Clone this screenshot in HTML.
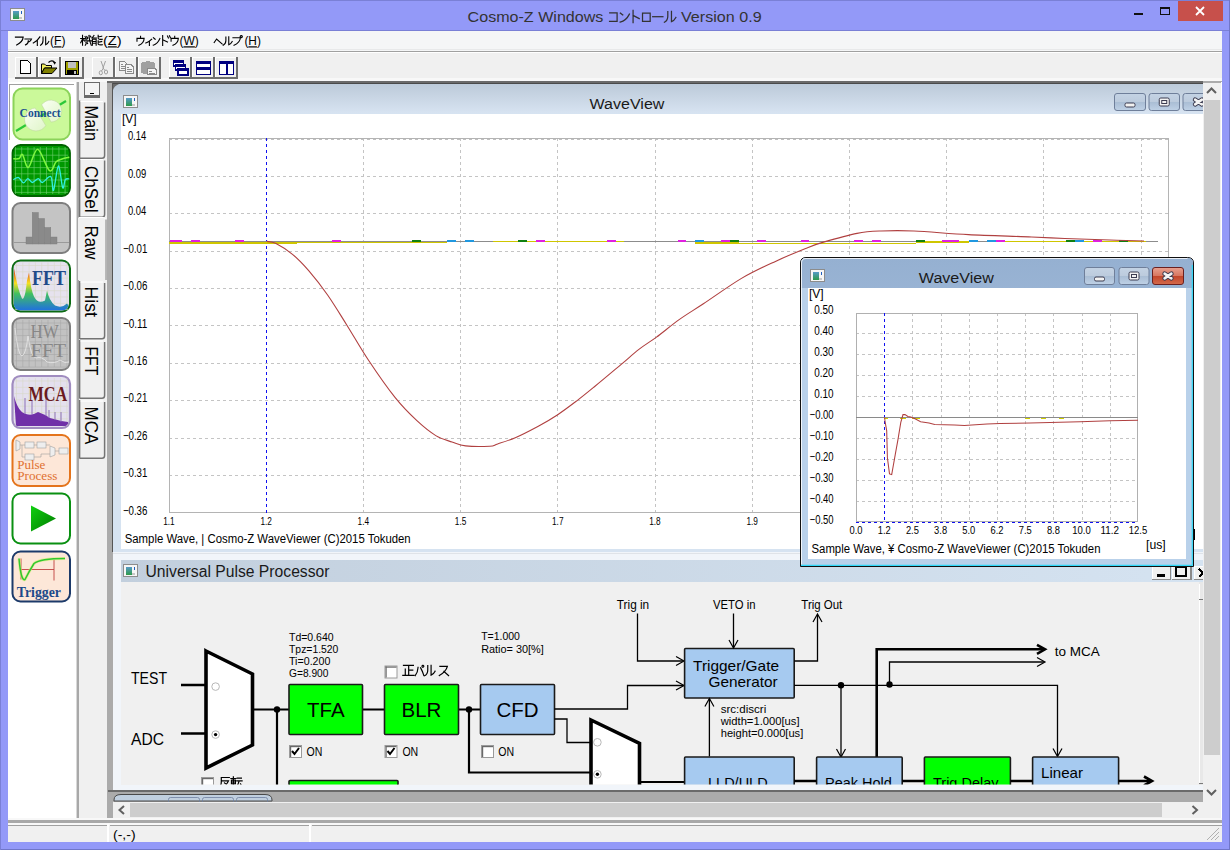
<!DOCTYPE html>
<html><head><meta charset="utf-8">
<style>
html,body{margin:0;padding:0;width:1230px;height:850px;overflow:hidden;background:#9399f8;}
svg{position:absolute;left:0;top:0;}
text{font-family:"Liberation Sans",sans-serif;}
.serif{font-family:"Liberation Serif",serif;}
</style></head><body>
<svg width="1230" height="850" viewBox="0 0 1230 850" shape-rendering="crispEdges">
<defs>
<linearGradient id="gMainTitle" x1="0" y1="0" x2="0" y2="1"><stop offset="0" stop-color="#bccad9"/><stop offset="1" stop-color="#d7e3f1"/></linearGradient>
<linearGradient id="gSmallTitle" x1="0" y1="0" x2="0" y2="1"><stop offset="0" stop-color="#95b0d1"/><stop offset="1" stop-color="#b8d0ea"/></linearGradient>
<linearGradient id="gBtn" x1="0" y1="0" x2="0" y2="1"><stop offset="0" stop-color="#c4d3e4"/><stop offset="0.5" stop-color="#bccbdd"/><stop offset="0.5" stop-color="#a9bdd4"/><stop offset="1" stop-color="#bfd1e6"/></linearGradient>
<linearGradient id="gClose" x1="0" y1="0" x2="0" y2="1"><stop offset="0" stop-color="#e8a190"/><stop offset="0.5" stop-color="#d7755f"/><stop offset="0.5" stop-color="#c2442a"/><stop offset="1" stop-color="#d36a4c"/></linearGradient>
<linearGradient id="gFFT" x1="0" y1="0" x2="0" y2="1"><stop offset="0" stop-color="#e03020"/><stop offset="0.35" stop-color="#f8e020"/><stop offset="0.6" stop-color="#40c060"/><stop offset="1" stop-color="#2070e0"/></linearGradient>
<linearGradient id="gPlay" x1="0" y1="0" x2="1" y2="1"><stop offset="0" stop-color="#10d010"/><stop offset="1" stop-color="#007a00"/></linearGradient>
<linearGradient id="gIcon" x1="0" y1="0" x2="0" y2="1"><stop offset="0" stop-color="#5a9ad0"/><stop offset="1" stop-color="#2f9a50"/></linearGradient>
</defs>

<rect x="0" y="0" width="1230" height="850" fill="#9399f8"/>
<rect x="0" y="0" width="1230" height="1" fill="#7a80d6"/>
<rect x="0" y="30" width="1230" height="1" fill="#7a80d6"/><rect x="0" y="849" width="1230" height="1" fill="#7076c8"/><rect x="1229" y="0" width="1" height="850" fill="#7076c8"/><rect x="0" y="0" width="1" height="850" fill="#7a80d6"/>
<rect x="10.5" y="8.5" width="14" height="12" fill="#f6f6f6" stroke="#8c8c8c" stroke-width="1"/><rect x="12.5" y="10.5" width="6" height="8" fill="url(#gIcon)"/><rect x="20.5" y="10.5" width="1" height="3" fill="#2060c0"/><rect x="18.5" y="16.5" width="3" height="2" fill="#c8c8c8"/>
<text x="467.6" y="22" font-size="15.5" fill="#333" textLength="135.8" lengthAdjust="spacingAndGlyphs" shape-rendering="auto">Cosmo-Z Windows</text>
<path transform="translate(609.3,12.3) scale(0.8300,0.9700)" d="M0.5 0.6 H9.4 V9.4 H0.3" fill="none" stroke="#333" stroke-width="1.25" vector-effect="non-scaling-stroke" stroke-linecap="square" shape-rendering="auto"/>
<path transform="translate(619.5,12.3) scale(1.0300,1.0200)" d="M0.8 0.8 L3.2 2.6 M0.6 9.6 Q6.5 8.2 9.6 1.8" fill="none" stroke="#333" stroke-width="1.25" vector-effect="non-scaling-stroke" stroke-linecap="square" shape-rendering="auto"/>
<path transform="translate(632.2,10.3) scale(0.7300,1.2200)" d="M1.2 0 V10 M1.2 4.2 L9.6 6.8" fill="none" stroke="#333" stroke-width="1.25" vector-effect="non-scaling-stroke" stroke-linecap="square" shape-rendering="auto"/>
<path transform="translate(642,12.5) scale(0.8700,0.9500)" d="M0.6 0.6 H9.4 V9.4 H0.6 Z" fill="none" stroke="#333" stroke-width="1.25" vector-effect="non-scaling-stroke" stroke-linecap="square" shape-rendering="auto"/>
<path transform="translate(652.7,12) scale(1.0200,0.9400)" d="M0 5 H10" fill="none" stroke="#333" stroke-width="1.25" vector-effect="non-scaling-stroke" stroke-linecap="square" shape-rendering="auto"/>
<path transform="translate(663.9,11) scale(1.2200,1.1500)" d="M3.2 0.6 V4.5 Q3.2 8.2 0.4 9.8 M6.2 0.4 V9.2 Q8.4 8.4 9.8 5.6" fill="none" stroke="#333" stroke-width="1.25" vector-effect="non-scaling-stroke" stroke-linecap="square" shape-rendering="auto"/>
<text x="681" y="22" font-size="15.5" fill="#333" textLength="80.6" lengthAdjust="spacingAndGlyphs" shape-rendering="auto">Version 0.9</text>
<rect x="1134" y="13" width="9" height="2" fill="#111"/>
<rect x="1160.5" y="7.5" width="9" height="7" fill="none" stroke="#111" stroke-width="1"/><rect x="1160" y="7" width="10" height="2" fill="#111"/>
<rect x="1178" y="1" width="45" height="20" fill="#c7504b"/>
<path d="M1196 7 L1204 15 M1204 7 L1196 15" stroke="#fff" stroke-width="1.8" shape-rendering="auto"/>
<rect x="8" y="31" width="1214" height="20" fill="#f5f6f7"/>
<rect x="8" y="49" width="1214" height="1" fill="#e8e9ea"/><rect x="8" y="51" width="1214" height="1" fill="#a0a0a0"/><rect x="8" y="52" width="1214" height="1" fill="#ffffff"/>
<g font-size="12" fill="#000" shape-rendering="auto">
<path transform="translate(14.9,36.4) scale(0.8800,0.8800)" d="M0.6 0.8 H9.4 Q9 6.2 2 9.8" fill="none" stroke="#000" stroke-width="1.1" vector-effect="non-scaling-stroke" stroke-linecap="square" shape-rendering="auto"/>
<path transform="translate(24.6,38.3) scale(0.7400,0.6700)" d="M0.5 1 H9.4 Q8.6 4.2 6 5.2 M5 3.6 Q5 8.2 1.2 9.8" fill="none" stroke="#000" stroke-width="1.1" vector-effect="non-scaling-stroke" stroke-linecap="square" shape-rendering="auto"/>
<path transform="translate(33,36.4) scale(0.7200,0.9100)" d="M9.6 0.5 Q6 5.2 0.4 7.2 M6 4 V10" fill="none" stroke="#000" stroke-width="1.1" vector-effect="non-scaling-stroke" stroke-linecap="square" shape-rendering="auto"/>
<path transform="translate(40.2,36.4) scale(0.8800,0.9100)" d="M3.2 0.6 V4.5 Q3.2 8.2 0.4 9.8 M6.2 0.4 V9.2 Q8.4 8.4 9.8 5.6" fill="none" stroke="#000" stroke-width="1.1" vector-effect="non-scaling-stroke" stroke-linecap="square" shape-rendering="auto"/>
<path transform="translate(80.7,35.4) scale(1.0800,0.9800)" d="M0 3.2 H3.4 M1.7 0 V10 M1.7 3.6 L0 7.4 M1.9 3.8 L3.4 5.6 M4 1.2 L5 2.6 L4 4 M5.6 1.2 L6.6 2.6 L5.6 4 M3.8 5.6 H10 M7.6 0 Q8 6 9.8 10 M4.2 10 L6 7 M8.8 0.6 L9.6 1.8 M4.6 7.6 L6.4 8.4" fill="none" stroke="#000" stroke-width="1.1" vector-effect="non-scaling-stroke" stroke-linecap="square" shape-rendering="auto"/>
<path transform="translate(91.5,35.4) scale(1.1100,0.9800)" d="M2.2 0 L0.6 2.6 H4.4 M0.8 4 H4.2 V10 M0.8 4 V10 M0.8 6.2 H4.2 M0.8 8 H4.2 M6 0 V3 Q6 4.2 9.8 4 M6 1.6 L9.2 0.8 M6 5.6 V8.8 Q6 9.8 9.8 9.6 M6 7 L9.2 6.2" fill="none" stroke="#000" stroke-width="1.1" vector-effect="non-scaling-stroke" stroke-linecap="square" shape-rendering="auto"/>
<path transform="translate(136.3,36.4) scale(0.8500,0.9100)" d="M5 0 V2.2 M0.8 5.2 V2.2 H9.2 Q9 7.2 3 9.8" fill="none" stroke="#000" stroke-width="1.1" vector-effect="non-scaling-stroke" stroke-linecap="square" shape-rendering="auto"/>
<path transform="translate(145.5,38.5) scale(0.6500,0.7000)" d="M9.6 1 Q6 4.8 0.5 6.4 M6 3.8 V10" fill="none" stroke="#000" stroke-width="1.1" vector-effect="non-scaling-stroke" stroke-linecap="square" shape-rendering="auto"/>
<path transform="translate(152.8,37) scale(0.7400,0.8500)" d="M0.8 0.8 L3.2 2.6 M0.6 9.6 Q6.5 8.2 9.6 1.8" fill="none" stroke="#000" stroke-width="1.1" vector-effect="non-scaling-stroke" stroke-linecap="square" shape-rendering="auto"/>
<path transform="translate(161.3,35.5) scale(0.9100,1.0000)" d="M1.5 0 V10 M1.5 4.2 L6.8 6.4 M6.8 0.6 L7.8 2.6 M9 0.2 L10 2.2" fill="none" stroke="#000" stroke-width="1.1" vector-effect="non-scaling-stroke" stroke-linecap="square" shape-rendering="auto"/>
<path transform="translate(170.4,36.4) scale(0.8600,0.9100)" d="M5 0 V2.2 M0.8 5.2 V2.2 H9.2 Q9 7.2 3 9.8" fill="none" stroke="#000" stroke-width="1.1" vector-effect="non-scaling-stroke" stroke-linecap="square" shape-rendering="auto"/>
<path transform="translate(214.2,37.5) scale(0.8000,0.7000)" d="M0 7.2 L3 2.2 L10 9.4" fill="none" stroke="#000" stroke-width="1.1" vector-effect="non-scaling-stroke" stroke-linecap="square" shape-rendering="auto"/>
<path transform="translate(222.8,36.4) scale(0.9600,0.9100)" d="M3.2 0.6 V4.5 Q3.2 8.2 0.4 9.8 M6.2 0.4 V9.2 Q8.4 8.4 9.8 5.6" fill="none" stroke="#000" stroke-width="1.1" vector-effect="non-scaling-stroke" stroke-linecap="square" shape-rendering="auto"/>
<path transform="translate(232.4,35.5) scale(1.0800,1.0000)" d="M0.5 2.2 H7.4 Q7 7.2 1.5 9.8 M8.2 0.1 A1 1 0 1 0 8.21 0.1" fill="none" stroke="#000" stroke-width="1.1" vector-effect="non-scaling-stroke" stroke-linecap="square" shape-rendering="auto"/>
<text x="50" y="45.3" textLength="15.5" lengthAdjust="spacingAndGlyphs">(<tspan text-decoration="underline">F</tspan>)</text>
<text x="103" y="45.3" textLength="18.700000000000003" lengthAdjust="spacingAndGlyphs">(<tspan text-decoration="underline">Z</tspan>)</text>
<text x="179.5" y="45.3" textLength="19.400000000000006" lengthAdjust="spacingAndGlyphs">(<tspan text-decoration="underline">W</tspan>)</text>
<text x="244.4" y="45.3" textLength="16.49999999999997" lengthAdjust="spacingAndGlyphs">(<tspan text-decoration="underline">H</tspan>)</text>
</g>
<rect x="8" y="53" width="1214" height="28" fill="#f0f0f0"/>
<rect x="8" y="78" width="1214" height="4" fill="#f8f8f8"/>
<rect x="15" y="57" width="22" height="21" fill="#efefef"/><rect x="15" y="57" width="22" height="1" fill="#ffffff"/><rect x="15" y="57" width="1" height="21" fill="#ffffff"/><rect x="15" y="77.2" width="22.5" height="1.3" fill="#6e6e6e"/><rect x="36.3" y="57" width="1.3" height="21.5" fill="#6e6e6e"/>
<rect x="38" y="57" width="22" height="21" fill="#efefef"/><rect x="38" y="57" width="22" height="1" fill="#ffffff"/><rect x="38" y="57" width="1" height="21" fill="#ffffff"/><rect x="38" y="77.2" width="22.5" height="1.3" fill="#6e6e6e"/><rect x="59.3" y="57" width="1.3" height="21.5" fill="#6e6e6e"/>
<rect x="61" y="57" width="22" height="21" fill="#efefef"/><rect x="61" y="57" width="22" height="1" fill="#ffffff"/><rect x="61" y="57" width="1" height="21" fill="#ffffff"/><rect x="61" y="77.2" width="22.5" height="1.3" fill="#6e6e6e"/><rect x="82.3" y="57" width="1.3" height="21.5" fill="#6e6e6e"/>
<rect x="92" y="57" width="22" height="21" fill="#efefef"/><rect x="92" y="57" width="22" height="1" fill="#ffffff"/><rect x="92" y="57" width="1" height="21" fill="#ffffff"/><rect x="92" y="77.2" width="22.5" height="1.3" fill="#6e6e6e"/><rect x="113.3" y="57" width="1.3" height="21.5" fill="#6e6e6e"/>
<rect x="115" y="57" width="22" height="21" fill="#efefef"/><rect x="115" y="57" width="22" height="1" fill="#ffffff"/><rect x="115" y="57" width="1" height="21" fill="#ffffff"/><rect x="115" y="77.2" width="22.5" height="1.3" fill="#6e6e6e"/><rect x="136.3" y="57" width="1.3" height="21.5" fill="#6e6e6e"/>
<rect x="138" y="57" width="22" height="21" fill="#efefef"/><rect x="138" y="57" width="22" height="1" fill="#ffffff"/><rect x="138" y="57" width="1" height="21" fill="#ffffff"/><rect x="138" y="77.2" width="22.5" height="1.3" fill="#6e6e6e"/><rect x="159.3" y="57" width="1.3" height="21.5" fill="#6e6e6e"/>
<rect x="169" y="57" width="22" height="21" fill="#efefef"/><rect x="169" y="57" width="22" height="1" fill="#ffffff"/><rect x="169" y="57" width="1" height="21" fill="#ffffff"/><rect x="169" y="77.2" width="22.5" height="1.3" fill="#6e6e6e"/><rect x="190.3" y="57" width="1.3" height="21.5" fill="#6e6e6e"/>
<rect x="192" y="57" width="22" height="21" fill="#efefef"/><rect x="192" y="57" width="22" height="1" fill="#ffffff"/><rect x="192" y="57" width="1" height="21" fill="#ffffff"/><rect x="192" y="77.2" width="22.5" height="1.3" fill="#6e6e6e"/><rect x="213.3" y="57" width="1.3" height="21.5" fill="#6e6e6e"/>
<rect x="215" y="57" width="22" height="21" fill="#efefef"/><rect x="215" y="57" width="22" height="1" fill="#ffffff"/><rect x="215" y="57" width="1" height="21" fill="#ffffff"/><rect x="215" y="77.2" width="22.5" height="1.3" fill="#6e6e6e"/><rect x="236.3" y="57" width="1.3" height="21.5" fill="#6e6e6e"/>
<path d="M20.5 60.5 H27.5 L30.5 63.5 V73.5 H20.5 Z" fill="#fff" stroke="#000" stroke-width="1"/>
<path d="M41.5 64 H44.5 L46 65.5 H51.5 V68 H44.5 L41.5 73.5 Z" fill="#f4f060" stroke="#000" stroke-width="1" shape-rendering="auto"/><path d="M41.5 73.5 L44.5 68 H57 L52 73.5 Z" fill="#808000" stroke="#000" stroke-width="1" shape-rendering="auto"/><path d="M48.5 62.5 Q51.5 59.5 54.5 62" fill="none" stroke="#000" stroke-width="1.1" shape-rendering="auto"/><path d="M53 62 L56 62 L54.8 64.8 Z" fill="#000" shape-rendering="auto"/>
<rect x="65" y="61" width="14" height="14" fill="#000"/><rect x="66" y="62" width="12" height="12" fill="#a0a000"/><rect x="68" y="62" width="8" height="6" fill="#c0c0c0"/><rect x="67" y="70" width="10" height="4" fill="#000"/><rect x="74" y="71" width="2" height="3" fill="#c0c0c0"/>
<g stroke="#a0a0a0" fill="none" stroke-width="1" shape-rendering="auto"><path d="M101 61 L103.5 68 L101.5 71 M105.5 61 L103 68 L105 70.5"/><ellipse cx="100.8" cy="72.8" rx="1.6" ry="2"/><ellipse cx="106" cy="72" rx="1.6" ry="2"/></g>
<g fill="#f4f4f4" stroke="#8a8a8a" stroke-width="1"><path d="M119.5 61.5 H124.5 L126.5 63.5 V70.5 H119.5 Z"/><path d="M125.5 64.5 H131 L133.5 67 V73.5 H125.5 Z"/></g><g fill="#8a8a8a"><rect x="121" y="64" width="2" height="1"/><rect x="121" y="66" width="4" height="1"/><rect x="121" y="68" width="4" height="1"/><rect x="127" y="67" width="2" height="1"/><rect x="127" y="69" width="5" height="1"/><rect x="127" y="71" width="5" height="1"/></g>
<g fill="#a0a0a0"><rect x="141.2" y="62" width="13.5" height="11.5" rx="1.5"/><rect x="146" y="61" width="4" height="2"/></g><path d="M147.5 68.5 H155 L156.5 70 V74.5 H147.5 Z" fill="#f4f4f4" stroke="#8a8a8a" stroke-width="1"/><rect x="149" y="71" width="3" height="1" fill="#8a8a8a"/><rect x="149" y="73" width="6" height="0.8" fill="#8a8a8a"/>
<g fill="#fff" stroke="#000080" stroke-width="1.5"><rect x="173.5" y="61" width="10" height="5"/><rect x="175.5" y="65" width="10" height="5"/><rect x="178" y="69" width="10" height="6"/></g><g fill="#000080"><rect x="173" y="61" width="11" height="2"/><rect x="175" y="65" width="11" height="2"/><rect x="177" y="69" width="12" height="2"/></g>
<rect x="196.5" y="61.5" width="14" height="13" fill="#fff" stroke="#000080" stroke-width="1.5"/><rect x="196" y="61" width="15" height="3" fill="#000080"/><rect x="196" y="67" width="15" height="3" fill="#000080"/>
<rect x="219.5" y="61.5" width="14" height="13" fill="#fff" stroke="#000080" stroke-width="1.5"/><rect x="219" y="61" width="15" height="3" fill="#000080"/><rect x="226" y="61" width="1.5" height="14" fill="#000080"/>
<rect x="8" y="82" width="70" height="737" fill="#ffffff"/>
<rect x="9" y="84" width="65" height="1" fill="#a0a0a0"/><rect x="9" y="84" width="1" height="56" fill="#a0a0a0"/>
<rect x="76" y="82" width="1" height="737" fill="#d8d8d8"/><rect x="77" y="82" width="2" height="737" fill="#a8a8a8"/>
<g shape-rendering="auto">
<rect x="13.5" y="88.5" width="56.5" height="51" rx="9" fill="#cbf99a" stroke="#8cd35a" stroke-width="2"/>
<path d="M16 131 L66 101" stroke="#2cc838" stroke-width="2.2"/>
<defs><linearGradient id="gPlug" x1="0" y1="0" x2="1" y2="1"><stop offset="0" stop-color="#fbfff4"/><stop offset="1" stop-color="#dff5c8"/></linearGradient></defs>
<path d="M35.2 108 A11.5 11.5 0 1 0 45.8 125.6 Z" fill="url(#gPlug)" stroke="#c0d8a0" stroke-width="0.6"/>
<path d="M41.7 104.8 A11 11 0 1 1 51 122.1 Z" fill="url(#gPlug)" stroke="#c0d8a0" stroke-width="0.6"/>
<text x="19.6" y="117.4" font-size="13.5" class="serif" font-weight="bold" fill="#1a4f8f" textLength="41" lengthAdjust="spacingAndGlyphs">Connect</text>
<rect x="12.5" y="145" width="57.5" height="51" rx="8" fill="#009800" stroke="#006200" stroke-width="1.8"/>
<path d="M15.5 147 V194 M21.7 147 V194 M27.9 147 V194 M34.1 147 V194 M40.3 147 V194 M46.5 147 V194 M52.7 147 V194 M58.9 147 V194 M65.1 147 V194 M14.5 149.0 H68.0 M14.5 155.2 H68.0 M14.5 161.4 H68.0 M14.5 167.6 H68.0 M14.5 173.8 H68.0 M14.5 180.0 H68.0 M14.5 186.2 H68.0 M14.5 192.4 H68.0 " stroke="#70d070" stroke-width="0.6"/>
<path d="M13.3 158.8 C14.3 158.8 17.7 159.2 19.2 158.5 C20.7 157.8 21.0 153.0 22.5 154.5 C24.0 156.0 25.9 168.3 28.4 167.4 C30.9 166.5 34.2 148.8 37.7 149.3 C41.2 149.9 46.4 168.6 49.5 170.7 C52.6 172.8 54.0 163.8 56.1 161.8 C58.2 159.9 59.8 159.8 62 159 C64.2 158.2 68.1 157.5 69.3 157.2" fill="none" stroke="#80f840" stroke-width="1.5"/>
<path d="M13.3 179.6 C14.2 179.3 16.9 177.0 18.6 177.6 C20.3 178.2 22.0 182.7 23.5 182.9 C25.0 183.1 26.3 178.7 27.8 178.6 C29.3 178.5 30.6 182.5 32.4 182.5 C34.1 182.5 36.6 178.6 38.3 178.6 C39.9 178.6 40.2 182.8 42.3 182.5 C44.4 182.2 48.9 175.3 50.8 176.6 C52.7 177.9 52.2 192.2 53.5 190.4 C54.8 188.6 56.9 166.4 58.4 166 C59.9 165.6 61.6 185.5 62.7 187.8 C63.9 190.1 64.2 181.1 65.3 179.6 C66.4 178.1 68.6 179.0 69.3 178.9" fill="none" stroke="#30f0e0" stroke-width="1.3"/>
<rect x="12.5" y="203" width="57.5" height="50" rx="8" fill="#c4c4c4" stroke="#7e7e7e" stroke-width="2"/>
<rect x="13.5" y="242" width="55.5" height="1" fill="#9a9a9a"/>
<rect x="26" y="237" width="6.2" height="7" fill="#8a8a8a" stroke="#7a7a7a" stroke-width="0.4"/>
<rect x="32.2" y="212.5" width="6.2" height="31.5" fill="#8a8a8a" stroke="#7a7a7a" stroke-width="0.4"/>
<rect x="38.4" y="218.5" width="6.2" height="25.5" fill="#8a8a8a" stroke="#7a7a7a" stroke-width="0.4"/>
<rect x="44.6" y="227.5" width="6.2" height="16.5" fill="#8a8a8a" stroke="#7a7a7a" stroke-width="0.4"/>
<rect x="50.8" y="237" width="6.2" height="7" fill="#8a8a8a" stroke="#7a7a7a" stroke-width="0.4"/>
<rect x="12.5" y="260.5" width="57.5" height="51" rx="8" fill="#e6e2ee" stroke="#0b6a12" stroke-width="2"/>
<path d="M16.5 262.5 V309.5 M22.8 262.5 V309.5 M29.1 262.5 V309.5 M35.4 262.5 V309.5 M41.7 262.5 V309.5 M48.0 262.5 V309.5 M54.3 262.5 V309.5 M60.6 262.5 V309.5 M66.9 262.5 V309.5 M14.5 265.5 H68.0 M14.5 271.8 H68.0 M14.5 278.1 H68.0 M14.5 284.4 H68.0 M14.5 290.7 H68.0 M14.5 297.0 H68.0 M14.5 303.3 H68.0 M14.5 309.6 H68.0 " stroke="#d8d8c8" stroke-width="0.6"/>
<defs><clipPath id="cFFT"><rect x="13.5" y="261.5" width="55.5" height="49" rx="7"/></clipPath><clipPath id="cMCA"><rect x="13.5" y="377" width="55.5" height="50" rx="7"/></clipPath></defs>
<path clip-path="url(#cFFT)" d="M14 268.5 Q18 290.5 22 298.5 Q25 300.5 27 280.5 L29 272.5 Q31 290.5 34 296.5 Q38 304.5 45 300.5 L47 290.5 Q49 300.5 55 305.5 Q62 308.5 67 303.5 L70 307.5 L70 310.5 L14 310.5 Z" fill="url(#gFFT)"/>
<text x="32" y="285.3" font-size="20" class="serif" font-weight="bold" fill="#1f4a8a" textLength="34" lengthAdjust="spacingAndGlyphs">FFT</text>
<rect x="12.5" y="318" width="57.5" height="52" rx="8" fill="#c2c2c2" stroke="#7e7e7e" stroke-width="2"/>
<path d="M16.5 320 V367 M22.8 320 V367 M29.1 320 V367 M35.4 320 V367 M41.7 320 V367 M48.0 320 V367 M54.3 320 V367 M60.6 320 V367 M66.9 320 V367 M14.5 323.0 H68.0 M14.5 329.3 H68.0 M14.5 335.6 H68.0 M14.5 341.9 H68.0 M14.5 348.2 H68.0 M14.5 354.5 H68.0 M14.5 360.8 H68.0 M14.5 367.1 H68.0 " stroke="#a8a8a8" stroke-width="0.6"/>
<path d="M15 328 Q18 356 22 356 Q26 354 28 336 Q31 358 36 358 Q42 356 47 362 Q55 364 60 360 Q65 364 69 362" fill="none" stroke="#e8e8e8" stroke-width="0.8"/>
<text x="30.6" y="338" font-size="19" class="serif" fill="#878787" textLength="28.2" lengthAdjust="spacingAndGlyphs">HW</text>
<text x="30.6" y="356.5" font-size="19" class="serif" fill="#878787" textLength="35.4" lengthAdjust="spacingAndGlyphs">FFT</text>
<rect x="12.5" y="376" width="57.5" height="52" rx="8" fill="#e4e0ee" stroke="#a08cc0" stroke-width="2.2"/>
<path d="M16.5 378 V425 M22.8 378 V425 M29.1 378 V425 M35.4 378 V425 M41.7 378 V425 M48.0 378 V425 M54.3 378 V425 M60.6 378 V425 M66.9 378 V425 M14.5 381.0 H68.0 M14.5 387.3 H68.0 M14.5 393.6 H68.0 M14.5 399.9 H68.0 M14.5 406.2 H68.0 M14.5 412.5 H68.0 M14.5 418.8 H68.0 M14.5 425.1 H68.0 " stroke="#d8d8c8" stroke-width="0.6"/>
<path clip-path="url(#cMCA)" d="M14 396 Q18 412 26 414 Q32 416 38 412 Q44 414 50 418 Q60 421 68 422 L68 426 L16 426 Z" fill="#7030a8"/>
<path d="M25 398 V414 M32 400 V414 M46 396 V416 M49 410 V418 M55 412 V420 M61 412 V422" stroke="#8c70b8" stroke-width="1"/>
<text x="28.5" y="401" font-size="20" class="serif" font-weight="bold" fill="#6a1a20" textLength="38.7" lengthAdjust="spacingAndGlyphs">MCA</text>
<rect x="12.5" y="435" width="57.5" height="51" rx="8" fill="#fde7d8" stroke="#e4741c" stroke-width="2"/>
<g fill="#eeeeee" stroke="#a0a0a0" stroke-width="0.6"><path d="M16 440 L20 442 V449 L16 451 Z"/><rect x="25" y="442" width="9" height="6"/><rect x="37" y="442" width="9" height="6"/><rect x="25" y="454" width="9" height="6"/><path d="M50 446 L55 448 V455 L50 457 Z"/><rect x="59" y="448" width="9" height="6"/></g>
<path d="M20 445 H25 M34 445 H37 M46 445 H50 M22 445 V457 H25 M34 457 H41 V454 H50 M55 451 H59" fill="none" stroke="#a0a0a0" stroke-width="0.6"/>
<text x="17.2" y="469.4" font-size="12.5" class="serif" fill="#e07030" textLength="28.2" lengthAdjust="spacingAndGlyphs">Pulse</text>
<text x="17.2" y="480" font-size="12.5" class="serif" fill="#e07030" textLength="40.2" lengthAdjust="spacingAndGlyphs">Process</text>
<rect x="12.5" y="493.5" width="57.5" height="50" rx="8" fill="#ffffff" stroke="#0a9012" stroke-width="2"/>
<path d="M31 505.5 L56 518.5 L31 531.5 Z" fill="url(#gPlay)"/>
<rect x="12.5" y="551.5" width="57.5" height="50" rx="8" fill="#fde7d8" stroke="#1c3a6a" stroke-width="2"/>
<path d="M21 558.5 V579.5 M54 559.5 V580.5 M21 569.5 H54" stroke="#c04040" stroke-width="0.9"/>
<path d="M19 558.5 Q21 581.5 25 579.5 Q29 571.5 34 563.5 Q40 558.5 65 558.5" fill="none" stroke="#d8f070" stroke-width="3" opacity="0.6"/>
<path d="M19 558.5 Q21 581.5 25 579.5 Q29 571.5 34 563.5 Q40 558.5 65 558.5" fill="none" stroke="#30c830" stroke-width="1.5"/>
<text x="16.8" y="596.8" font-size="15" class="serif" font-weight="bold" fill="#1c4a8a" textLength="44.2" lengthAdjust="spacingAndGlyphs">Trigger</text>
</g>
<rect x="79" y="82" width="29" height="737" fill="#f0f0f0"/>
<rect x="84.5" y="82.5" width="15" height="15" fill="#f4f4f4" stroke="#6a6a6a" stroke-width="1"/><rect x="85" y="95" width="15" height="2" fill="#6a6a6a"/><rect x="90" y="93" width="4" height="1" fill="#000"/>
<g shape-rendering="auto">
<path d="M79.6 100.5 V158.5 M79.6 158.3 H102 Q104.6 158.3 104.6 155.5 V102.5" fill="none" stroke="#747474" stroke-width="1.5"/>
<path d="M80.5 101.5 H103" stroke="#ffffff" stroke-width="1"/>
<text transform="translate(84.8,105.6) rotate(90)" font-size="18" fill="#000" textLength="35.400000000000006" lengthAdjust="spacingAndGlyphs">Main</text>
<path d="M79.6 158.5 V217.5 M79.6 217.3 H102 Q104.6 217.3 104.6 214.5 V160.5" fill="none" stroke="#747474" stroke-width="1.5"/>
<path d="M80.5 159.5 H103" stroke="#ffffff" stroke-width="1"/>
<text transform="translate(84.8,165.8) rotate(90)" font-size="18" fill="#000" textLength="46.89999999999998" lengthAdjust="spacingAndGlyphs">ChSel</text>
<rect x="78" y="217.5" width="28" height="62.5" fill="#f0f0f0"/>
<path d="M79 217.5 H103 Q105.5 217.5 105.5 219.5 V280" fill="none" stroke="#ffffff" stroke-width="1"/>
<path d="M106 219.5 V280" stroke="#a0a0a0" stroke-width="1.5"/>
<text transform="translate(84.8,225.6) rotate(90)" font-size="18" fill="#000" textLength="33.79999999999998" lengthAdjust="spacingAndGlyphs">Raw</text>
<path d="M79.6 281 V339 M79.6 338.8 H102 Q104.6 338.8 104.6 336 V283" fill="none" stroke="#747474" stroke-width="1.5"/>
<path d="M80.5 282 H103" stroke="#ffffff" stroke-width="1"/>
<text transform="translate(84.8,286.6) rotate(90)" font-size="18" fill="#000" textLength="30.399999999999977" lengthAdjust="spacingAndGlyphs">Hist</text>
<path d="M79.6 340 V398.5 M79.6 398.3 H102 Q104.6 398.3 104.6 395.5 V342" fill="none" stroke="#747474" stroke-width="1.5"/>
<path d="M80.5 341 H103" stroke="#ffffff" stroke-width="1"/>
<text transform="translate(84.8,346.5) rotate(90)" font-size="18" fill="#000" textLength="28.80000000000001" lengthAdjust="spacingAndGlyphs">FFT</text>
<path d="M79.6 400 V458.5 M79.6 458.3 H102 Q104.6 458.3 104.6 455.5 V402" fill="none" stroke="#747474" stroke-width="1.5"/>
<path d="M80.5 401 H103" stroke="#ffffff" stroke-width="1"/>
<text transform="translate(84.8,406.6) rotate(90)" font-size="18" fill="#000" textLength="37.89999999999998" lengthAdjust="spacingAndGlyphs">MCA</text>
</g>
<rect x="107" y="81" width="1115" height="738" fill="#ababab"/>
<rect x="107" y="81" width="1096" height="2" fill="#6a6a6a"/><rect x="112" y="83" width="1091" height="1" fill="#4a4a4a"/><rect x="112" y="83" width="1" height="469" fill="#555555"/>
<rect x="113" y="84" width="1090" height="468" fill="#d6e3f1"/>
<rect x="113" y="84" width="1090" height="29" fill="url(#gMainTitle)"/>
<path d="M113 84 H119 Q114 86 113 90 Z" fill="#6a6a6a" shape-rendering="auto"/>
<rect x="121" y="114" width="1082" height="434.5" fill="#ffffff"/>
<rect x="123.5" y="95.5" width="14" height="12" fill="#f6f6f6" stroke="#8c8c8c" stroke-width="1"/><rect x="125.5" y="97.5" width="6" height="8" fill="url(#gIcon)"/><rect x="133.5" y="97.5" width="1" height="3" fill="#2060c0"/><rect x="131.5" y="103.5" width="3" height="2" fill="#c8c8c8"/>
<text x="589.6" y="109" font-size="15.5" fill="#1a1a1a" textLength="74.8" lengthAdjust="spacingAndGlyphs" shape-rendering="auto">WaveView</text>
<rect x="1114.5" y="93.5" width="31" height="17" rx="2.5" fill="url(#gBtn)" stroke="#6f7f9a" stroke-width="1" shape-rendering="auto"/><rect x="1125.0" y="103.0" width="10" height="4" rx="1.5" fill="#f2f2f2" stroke="#3c3c50" stroke-width="1" shape-rendering="auto"/>
<rect x="1149.0" y="93.5" width="30.5" height="17" rx="2.5" fill="url(#gBtn)" stroke="#6f7f9a" stroke-width="1" shape-rendering="auto"/><rect x="1159.25" y="98.0" width="10" height="8" rx="1.5" fill="#f2f2f2" stroke="#3c3c50" stroke-width="1" shape-rendering="auto"/><rect x="1161.75" y="100.5" width="5" height="3" fill="none" stroke="#3c3c50" stroke-width="1" shape-rendering="auto"/>
<rect x="1183.0" y="93.5" width="31" height="17" rx="2.5" fill="url(#gBtn)" stroke="#6f7f9a" stroke-width="1" shape-rendering="auto"/><path d="M1195.1 99.7 L1201.9 104.3 M1201.9 99.7 L1195.1 104.3" stroke="#3c3c50" stroke-width="4.6" stroke-linecap="round" shape-rendering="auto"/><path d="M1195.1 99.7 L1201.9 104.3 M1201.9 99.7 L1195.1 104.3" stroke="#f4f4f4" stroke-width="2.6" stroke-linecap="round" shape-rendering="auto"/>
<g shape-rendering="crispEdges">
<path d="M169 176.5 H1169 M169 213.5 H1169 M169 251.5 H1169 M169 288.5 H1169 M169 325.5 H1169 M169 363.5 H1169 M169 400.5 H1169 M169 438.5 H1169 M169 475.5 H1169 " stroke="#c4c4c4" stroke-width="1" stroke-dasharray="3,3"/>
<path d="M266.5 138.4 V512.5 M363.5 138.4 V512.5 M460.5 138.4 V512.5 M557.5 138.4 V512.5 M655.5 138.4 V512.5 M752.5 138.4 V512.5 M849.5 138.4 V512.5 M946.5 138.4 V512.5 M1043.5 138.4 V512.5 M1141.5 138.4 V512.5 " stroke="#c4c4c4" stroke-width="1" stroke-dasharray="3,3"/>
<rect x="169.5" y="138.5" width="999" height="374" fill="none" stroke="#b4b4b4" stroke-width="1"/>
<path d="M169 139.5 H1169" stroke="#c0c0c0" stroke-width="1" stroke-dasharray="3,3"/>
<path d="M266.5 138 V512.5" stroke="#1010f0" stroke-width="1.2" stroke-dasharray="3,3"/>
</g>
<g font-size="11.5" fill="#000" shape-rendering="auto">
<text x="122" y="122.5" font-size="12">[V]</text>
<text x="146.2" y="140.4" font-size="12.5" text-anchor="end" textLength="18.3" lengthAdjust="spacingAndGlyphs">0.14</text>
<text x="146.2" y="177.8" font-size="12.5" text-anchor="end" textLength="18.3" lengthAdjust="spacingAndGlyphs">0.09</text>
<text x="146.2" y="215.2" font-size="12.5" text-anchor="end" textLength="18.3" lengthAdjust="spacingAndGlyphs">0.04</text>
<text x="147.4" y="252.6" font-size="12.5" text-anchor="end" textLength="24.5" lengthAdjust="spacingAndGlyphs">−0.01</text>
<text x="147.4" y="290.0" font-size="12.5" text-anchor="end" textLength="24.5" lengthAdjust="spacingAndGlyphs">−0.06</text>
<text x="147.4" y="327.5" font-size="12.5" text-anchor="end" textLength="24.5" lengthAdjust="spacingAndGlyphs">−0.11</text>
<text x="147.4" y="364.9" font-size="12.5" text-anchor="end" textLength="24.5" lengthAdjust="spacingAndGlyphs">−0.16</text>
<text x="147.4" y="402.3" font-size="12.5" text-anchor="end" textLength="24.5" lengthAdjust="spacingAndGlyphs">−0.21</text>
<text x="147.4" y="439.7" font-size="12.5" text-anchor="end" textLength="24.5" lengthAdjust="spacingAndGlyphs">−0.26</text>
<text x="147.4" y="477.1" font-size="12.5" text-anchor="end" textLength="24.5" lengthAdjust="spacingAndGlyphs">−0.31</text>
<text x="147.4" y="514.5" font-size="12.5" text-anchor="end" textLength="24.5" lengthAdjust="spacingAndGlyphs">−0.36</text>
<text x="163.2" y="524.7" font-size="11.5" textLength="11.5" lengthAdjust="spacingAndGlyphs">1.1</text>
<text x="260.4" y="524.7" font-size="11.5" textLength="11.5" lengthAdjust="spacingAndGlyphs">1.2</text>
<text x="357.6" y="524.7" font-size="11.5" textLength="11.5" lengthAdjust="spacingAndGlyphs">1.4</text>
<text x="454.8" y="524.7" font-size="11.5" textLength="11.5" lengthAdjust="spacingAndGlyphs">1.5</text>
<text x="552.0" y="524.7" font-size="11.5" textLength="11.5" lengthAdjust="spacingAndGlyphs">1.7</text>
<text x="649.2" y="524.7" font-size="11.5" textLength="11.5" lengthAdjust="spacingAndGlyphs">1.8</text>
<text x="746.4" y="524.7" font-size="11.5" textLength="11.5" lengthAdjust="spacingAndGlyphs">1.9</text>
<text x="124.7" y="542.7" font-size="12" textLength="286" lengthAdjust="spacingAndGlyphs">Sample Wave, | Cosmo-Z WaveViewer (C)2015 Tokuden</text>
</g>
<path d="M169 241.5 H1158" stroke="#8c8c8c" stroke-width="1.2"/>
<path d="M169 243 H297 M297 242.5 H447 M492.6 241.5 H623.5 M695 243 H739 M739 243.8 H915.8 M915.8 242 H968.5 M1004.6 241.2 H1146" stroke="#cfc600" stroke-width="1.2"/>
<path d="M169.8 240.5 H182" stroke="#e020e0" stroke-width="2"/>
<path d="M191 240.5 H199.8" stroke="#e020e0" stroke-width="2"/>
<path d="M235 240.5 H244" stroke="#e020e0" stroke-width="2"/>
<path d="M332 240.5 H341" stroke="#e020e0" stroke-width="2"/>
<path d="M411.7 240.5 H421" stroke="#108010" stroke-width="2"/>
<path d="M446.6 240.5 H455.6" stroke="#2098e0" stroke-width="2"/>
<path d="M465 240.5 H473.7" stroke="#2098e0" stroke-width="2"/>
<path d="M518 240.5 H527" stroke="#108010" stroke-width="2"/>
<path d="M535.7 240.5 H545.3" stroke="#e020e0" stroke-width="2"/>
<path d="M607 240.5 H616" stroke="#e020e0" stroke-width="2"/>
<path d="M677.7 240.5 H686" stroke="#e020e0" stroke-width="2"/>
<path d="M695 240.5 H704" stroke="#2098e0" stroke-width="2"/>
<path d="M721.3 240.5 H730" stroke="#e020e0" stroke-width="2"/>
<path d="M730 240.5 H739.3" stroke="#108010" stroke-width="2"/>
<path d="M757.4 240.5 H766.4" stroke="#e020e0" stroke-width="2"/>
<path d="M801 240.5 H809" stroke="#e020e0" stroke-width="2"/>
<path d="M854 240.5 H863" stroke="#e020e0" stroke-width="2"/>
<path d="M872 240.5 H881" stroke="#e020e0" stroke-width="2"/>
<path d="M915.8 240.5 H924.8" stroke="#108010" stroke-width="2"/>
<path d="M942 240.5 H959.4" stroke="#e020e0" stroke-width="2"/>
<path d="M969 240.5 H977.5" stroke="#2098e0" stroke-width="2"/>
<path d="M987 240.5 H995.5" stroke="#2098e0" stroke-width="2"/>
<path d="M995.5 240.5 H1004.6" stroke="#e020e0" stroke-width="2"/>
<path d="M1066 240.5 H1075" stroke="#108010" stroke-width="2"/>
<path d="M1075 240.5 H1084" stroke="#2098e0" stroke-width="2"/>
<path d="M1093 240.5 H1102" stroke="#e020e0" stroke-width="2"/>
<path d="M1119 240.5 H1128" stroke="#108010" stroke-width="2"/>
<path d="M266.8 241.4 C268.3 241.8 271.7 241.3 276 243.5 C280.3 245.7 287.1 249.8 292.5 254.3 C297.9 258.8 302.8 263.8 308.7 270.6 C314.6 277.4 321.3 286.0 327.6 295 C333.9 304.0 339.8 313.9 346.6 324.7 C353.4 335.5 360.1 347.6 368.2 359.8 C376.3 372.0 387.1 387.6 395.2 397.7 C403.3 407.8 410.1 414.4 416.9 420.7 C423.7 427.0 429.9 432.1 435.8 435.6 C441.7 439.2 447.0 440.3 452 442 C457.0 443.7 459.3 445.2 465.6 445.9 C471.9 446.6 484.4 446.5 489.7 446.2 C495.0 445.9 493.4 445.3 497.7 443.9 C502.0 442.5 508.5 440.6 515.3 437.7 C522.1 434.8 531.2 430.0 538.3 426.2 C545.4 422.4 551.2 419.0 557.7 414.7 C564.2 410.4 570.9 405.3 577.1 400.6 C583.3 395.9 587.4 392.5 594.7 386.5 C602.1 380.5 613.8 370.6 621.2 364.4 C628.6 358.2 633.0 353.9 638.9 349.4 C644.8 344.8 649.7 342.1 656.5 337.1 C663.3 332.1 671.7 324.9 679.5 319.4 C687.3 313.8 693.1 310.6 703.4 303.8 C713.7 297.0 729.5 285.5 741.5 278.4 C753.5 271.3 764.8 266.3 775.4 261.4 C786.0 256.4 797.1 251.9 805 248.7 C812.9 245.5 813.9 244.9 822.6 242.4 C831.3 239.9 847.3 235.3 857 233.4 C866.7 231.5 871.5 231.4 881 231 C890.5 230.6 899.4 230.4 914 231 C928.6 231.6 948.9 233.6 968.5 234.6 C988.1 235.6 1015.6 236.3 1031.6 237 C1047.6 237.7 1051.6 238.0 1064.7 238.5 C1077.8 239.0 1096.8 239.6 1110 240 C1123.2 240.4 1138.3 240.8 1144 241" fill="none" stroke="#b04040" stroke-width="1.1" shape-rendering="auto"/>
<rect x="113" y="552" width="1090" height="238" fill="#f1f5fa"/>
<rect x="113" y="553" width="1090" height="1" fill="#dfe3e8"/>
<rect x="108" y="790" width="1095" height="2" fill="#6a6a6a"/>
<defs><linearGradient id="gUPP" x1="0" y1="0" x2="1" y2="0"><stop offset="0" stop-color="#c2cfdd"/><stop offset="1" stop-color="#d5e3f1"/></linearGradient></defs>
<rect x="121" y="560" width="1082" height="22" fill="url(#gUPP)"/>
<rect x="123.5" y="564.5" width="14" height="12" fill="#f6f6f6" stroke="#8c8c8c" stroke-width="1"/><rect x="125.5" y="566.5" width="6" height="8" fill="url(#gIcon)"/><rect x="133.5" y="566.5" width="1" height="3" fill="#2060c0"/><rect x="131.5" y="572.5" width="3" height="2" fill="#c8c8c8"/>
<text x="145.5" y="577.4" font-size="16" fill="#1a1a1a" textLength="184" lengthAdjust="spacingAndGlyphs" shape-rendering="auto">Universal Pulse Processor</text>
<rect x="121" y="582" width="1078" height="202.5" fill="#f0f0f0"/>
<rect x="1152" y="566" width="19" height="14" fill="#f0f0f0"/><rect x="1152" y="566" width="19" height="1" fill="#fff"/><rect x="1152" y="566" width="1" height="14" fill="#fff"/><rect x="1152" y="578.5" width="19" height="1.5" fill="#8a8a8a"/><rect x="1169.5" y="566" width="1.5" height="14" fill="#8a8a8a"/><rect x="1157" y="574" width="8" height="3" fill="#000"/>
<rect x="1171.5" y="566" width="20" height="14" fill="#f0f0f0"/><rect x="1171.5" y="566" width="20" height="1" fill="#fff"/><rect x="1171.5" y="566" width="1" height="14" fill="#fff"/><rect x="1171.5" y="578.5" width="20" height="1.5" fill="#8a8a8a"/><rect x="1190.0" y="566" width="1.5" height="14" fill="#8a8a8a"/><rect x="1176.0" y="567" width="10" height="9" fill="none" stroke="#000" stroke-width="1.5"/>
<rect x="1194" y="566" width="12" height="14" fill="#f0f0f0"/><rect x="1194" y="566" width="12" height="1" fill="#fff"/><rect x="1194" y="566" width="1" height="14" fill="#fff"/><rect x="1194" y="578.5" width="12" height="1.5" fill="#8a8a8a"/><rect x="1204.5" y="566" width="1.5" height="14" fill="#8a8a8a"/><path d="M1199 569 L1203 573 L1199 577" fill="none" stroke="#000" stroke-width="2"/>
<rect x="1199" y="582" width="4" height="203" fill="#e8e8e8"/><rect x="1199" y="584" width="1.2" height="200" fill="#ffffff"/><rect x="1199" y="598.5" width="4" height="1.5" fill="#7a7a7a"/><rect x="1199" y="782.5" width="4" height="1.5" fill="#7a7a7a"/>
<path d="M114 801 V800 Q114 794.5 121 794.5 H265 Q272 794.5 272 800 V801 Z" fill="#c0cfdf" stroke="#4a4a4a" stroke-width="1" shape-rendering="auto"/>
<g fill="none" stroke="#7080a0" stroke-width="0.8" shape-rendering="auto"><rect x="168.5" y="797.5" width="31" height="8" rx="2"/><rect x="202.5" y="797.5" width="31" height="8" rx="2"/><rect x="236.5" y="797.5" width="31" height="8" rx="2"/></g>
<rect x="1203" y="83" width="19" height="719" fill="#f0f0f0"/>
<rect x="1204" y="100" width="15.5" height="655" fill="#cdcdcd"/>
<path d="M1207 93 L1211.5 88.5 L1216 93" fill="none" stroke="#606060" stroke-width="2" shape-rendering="auto"/>
<path d="M1207 790 L1211.5 794.5 L1216 790" fill="none" stroke="#606060" stroke-width="2" shape-rendering="auto"/>
<rect x="113" y="801.5" width="1109" height="17" fill="#f0f0f0"/>
<rect x="130" y="803" width="1032" height="14" fill="#cdcdcd"/>
<path d="M124 806 L119.5 810 L124 814" fill="none" stroke="#606060" stroke-width="2" shape-rendering="auto"/>
<path d="M1192.5 806 L1197 810 L1192.5 814" fill="none" stroke="#606060" stroke-width="2" shape-rendering="auto"/>
<rect x="1221" y="82" width="1" height="737" fill="#ffffff"/>
<rect x="8" y="819" width="1214" height="23" fill="#f0f0f0"/>
<rect x="8" y="818" width="1214" height="2" fill="#f8f8f8"/><rect x="8" y="820" width="1214" height="2.5" fill="#a8a8a8"/><rect x="8" y="822.5" width="1214" height="2" fill="#f8f8f8"/>
<rect x="8" y="825" width="99" height="1" fill="#a0a0a0"/><rect x="110" y="825" width="199" height="1" fill="#a0a0a0"/><rect x="312" y="825" width="910" height="1" fill="#a0a0a0"/>
<rect x="107" y="824" width="2" height="18" fill="#ffffff"/><rect x="309" y="824" width="2" height="18" fill="#ffffff"/>
<text x="113" y="838.5" font-size="13" fill="#000" textLength="22.6" lengthAdjust="spacingAndGlyphs" shape-rendering="auto">(-,-)</text>
<path d="M1207 840 L1219 828 M1211 840 L1219 832 M1215 840 L1219 836" stroke="#b0b0b0" stroke-width="1" shape-rendering="auto"/>
<defs><clipPath id="cUPP"><rect x="121" y="582" width="1078" height="202.5"/></clipPath></defs>
<g clip-path="url(#cUPP)" shape-rendering="auto">
<g fill="#000">
<text x="131" y="684" font-size="16.5" textLength="36" lengthAdjust="spacingAndGlyphs">TEST</text>
<text x="131" y="744.5" font-size="16.5" textLength="33" lengthAdjust="spacingAndGlyphs">ADC</text>
</g>
<path d="M181 685 H205 M181 733.5 H205" stroke="#000" stroke-width="2.6"/>
<path d="M206 651 L252.5 674 V745 L206 768 Z" fill="#fff" stroke="#000" stroke-width="3.6" stroke-linejoin="miter"/>
<circle cx="215.6" cy="686.6" r="3.8" fill="#fff" stroke="#b8b8b8" stroke-width="1"/>
<circle cx="215.6" cy="734.6" r="3.8" fill="#fff" stroke="#b8b8b8" stroke-width="1"/><circle cx="215.6" cy="734.6" r="1.7" fill="#000"/>
<path d="M253 709.5 H289 M277 709.5 V790 M362 709.5 H385 M458.5 709.5 H481 M469 709.5 V772.5 H590" fill="none" stroke="#000" stroke-width="2.2"/>
<circle cx="277" cy="709.5" r="3.2" fill="#000"/>
<circle cx="469" cy="709.5" r="3.2" fill="#000"/>
<rect x="289" y="684.5" width="73.5" height="50.0" fill="#00ff00" stroke="#1a1a1a" stroke-width="1.6" rx="1"/>
<rect x="384.5" y="684.5" width="74.0" height="50.0" fill="#00ff00" stroke="#1a1a1a" stroke-width="1.6" rx="1"/>
<rect x="480.5" y="684.5" width="74.0" height="50.0" fill="#a6caf0" stroke="#1a1a1a" stroke-width="1.6" rx="1"/>
<g font-size="20.5" fill="#000" text-anchor="middle"><text x="325.8" y="717">TFA</text><text x="421.5" y="717">BLR</text><text x="517.5" y="717">CFD</text></g>
<g font-size="11.5" fill="#000">
<text x="289" y="640.6" textLength="44.6" lengthAdjust="spacingAndGlyphs">Td=0.640</text>
<text x="289" y="652.6" textLength="49.4" lengthAdjust="spacingAndGlyphs">Tpz=1.520</text>
<text x="289" y="664.6" textLength="41.4" lengthAdjust="spacingAndGlyphs">Ti=0.200</text>
<text x="289" y="676.6" textLength="39.4" lengthAdjust="spacingAndGlyphs">G=8.900</text>
<text x="481.2" y="640.4" textLength="38.7" lengthAdjust="spacingAndGlyphs">T=1.000</text><text x="481.2" y="652.5" textLength="62.6" lengthAdjust="spacingAndGlyphs">Ratio= 30[%]</text>
</g>
<rect x="385.0" y="666.0" width="12" height="12" fill="#fff" stroke="#9a9a9a" stroke-width="1"/><rect x="385.5" y="666.5" width="11" height="1.2" fill="#6a6a6a"/><rect x="385.5" y="666.5" width="1.2" height="11" fill="#6a6a6a"/>
<path transform="translate(402.8,664.9) scale(1.1300,1.1000)" d="M0.6 0.5 H9.4 M5.2 0.5 V9.5 M5.2 4.8 H8.8 M2.2 3.8 V9.5 M0 9.5 H10" fill="none" stroke="#000" stroke-width="1.2" vector-effect="non-scaling-stroke" stroke-linecap="square" shape-rendering="auto"/>
<path transform="translate(414.8,665) scale(1.0100,1.1000)" d="M3.2 2.2 Q3 6.8 0.4 9.6 M5.8 2.6 Q7.6 5.6 9 9.6 M8 0.3 A0.9 0.9 0 1 0 8.01 0.3" fill="none" stroke="#000" stroke-width="1.2" vector-effect="non-scaling-stroke" stroke-linecap="square" shape-rendering="auto"/>
<path transform="translate(424.2,665) scale(1.1100,1.1000)" d="M3.2 0.6 V4.5 Q3.2 8.2 0.4 9.8 M6.2 0.4 V9.2 Q8.4 8.4 9.8 5.6" fill="none" stroke="#000" stroke-width="1.2" vector-effect="non-scaling-stroke" stroke-linecap="square" shape-rendering="auto"/>
<path transform="translate(438.9,665.5) scale(1.0100,1.0500)" d="M1 0.8 H8.4 Q7 5.8 0.4 9.6 M5 5.6 L9.6 9.6" fill="none" stroke="#000" stroke-width="1.2" vector-effect="non-scaling-stroke" stroke-linecap="square" shape-rendering="auto"/>
<rect x="289.5" y="745.5" width="12" height="12" fill="#fff" stroke="#9a9a9a" stroke-width="1"/><rect x="290" y="746" width="11" height="1.2" fill="#6a6a6a"/><rect x="290" y="746" width="1.2" height="11" fill="#6a6a6a"/><path d="M292 751 L294.5 754 L299 748" fill="none" stroke="#000" stroke-width="2"/>
<rect x="385.0" y="745.5" width="12" height="12" fill="#fff" stroke="#9a9a9a" stroke-width="1"/><rect x="385.5" y="746" width="11" height="1.2" fill="#6a6a6a"/><rect x="385.5" y="746" width="1.2" height="11" fill="#6a6a6a"/><path d="M387.5 751 L390.0 754 L394.5 748" fill="none" stroke="#000" stroke-width="2"/>
<rect x="481.5" y="745.5" width="12" height="12" fill="#fff" stroke="#9a9a9a" stroke-width="1"/><rect x="482" y="746" width="11" height="1.2" fill="#6a6a6a"/><rect x="482" y="746" width="1.2" height="11" fill="#6a6a6a"/>
<g font-size="12.5" fill="#000"><text x="306.6" y="755.5" textLength="15.8" lengthAdjust="spacingAndGlyphs">ON</text><text x="402.4" y="755.5" textLength="15.8" lengthAdjust="spacingAndGlyphs">ON</text><text x="498.2" y="755.5" textLength="15.8" lengthAdjust="spacingAndGlyphs">ON</text></g>
<rect x="201.5" y="777.5" width="12" height="12" fill="#fff" stroke="#9a9a9a" stroke-width="1"/><rect x="202" y="778" width="11" height="1.2" fill="#6a6a6a"/><rect x="202" y="778" width="1.2" height="11" fill="#6a6a6a"/>
<path transform="translate(219.9,776.9) scale(1.0000,1.0000)" d="M1.4 0.6 H9.4 M1.4 0.6 V4.8 Q1.4 8 0 9.8 M2.6 4 H8.6 Q7 8 2.6 9.8 M4.6 6 L9.8 9.8" fill="none" stroke="#000" stroke-width="1.2" vector-effect="non-scaling-stroke" stroke-linecap="square" shape-rendering="auto"/>
<path transform="translate(230.9,776.9) scale(1.1200,1.0000)" d="M0 1.6 H4.4 M2.2 0 V10 M0.5 3.2 H4 V7 H0.5 Z M0.5 5.1 H4 M0 8.6 H4.6 M5.6 1.2 H9.4 M5.2 4 H10 M7.4 4 L5.8 9 H9.6 M8.6 7 L9.8 9.4" fill="none" stroke="#000" stroke-width="1.2" vector-effect="non-scaling-stroke" stroke-linecap="square" shape-rendering="auto"/>
<rect x="289" y="780.5" width="109" height="19.5" fill="#00ff00" stroke="#1a1a1a" stroke-width="1.6" rx="1"/>
<path d="M554.5 709 H627.5 V685.5 H683.5 M554.5 719 H567 V742.5 H590 M637.5 613.5 V661 H683.5" fill="none" stroke="#000" stroke-width="1.3"/>
<path d="M676 681.0 L684 685.5 L676 690.0" fill="none" stroke="#000" stroke-width="1.2"/>
<path d="M676 656.5 L684 661 L676 665.5" fill="none" stroke="#000" stroke-width="1.2"/>
<g font-size="12" fill="#000"><text x="616.8" y="609" textLength="32.4" lengthAdjust="spacingAndGlyphs">Trig in</text><text x="713" y="609" textLength="42.5" lengthAdjust="spacingAndGlyphs">VETO in</text><text x="801.3" y="609" textLength="41" lengthAdjust="spacingAndGlyphs">Trig Out</text></g>
<path d="M591 720 L639.5 743.5 V820 L591 843 Z" fill="#fff" stroke="#000" stroke-width="3.6"/>
<circle cx="597.4" cy="742.3" r="3.8" fill="#fff" stroke="#b8b8b8" stroke-width="1"/>
<circle cx="597.4" cy="774.3" r="3.8" fill="#fff" stroke="#b8b8b8" stroke-width="1"/><circle cx="597.4" cy="774.3" r="1.7" fill="#000"/>
<path d="M640 782 H684" stroke="#000" stroke-width="2.2"/>
<rect x="684.6" y="648.5" width="109.60000000000002" height="49.5" fill="#a6caf0" stroke="#1a1a1a" stroke-width="1.6" rx="1"/>
<g font-size="14.5" fill="#000"><text x="693.1" y="670.8" textLength="85.9" lengthAdjust="spacingAndGlyphs">Trigger/Gate</text><text x="708.5" y="686.8" textLength="69.2" lengthAdjust="spacingAndGlyphs">Generator</text></g>
<path d="M733.5 613.5 V647.5 M794.2 661 H817.5 V615 M794.2 685.3 H1057.5 V755.5 M841 685.3 V756 M889.5 685.3 V662 H1044 M709.4 756.5 V699" fill="none" stroke="#000" stroke-width="1.3"/>
<path d="M729.0 640 L733.5 648 L738.0 640" fill="none" stroke="#000" stroke-width="1.2"/>
<path d="M813.0 622 L817.5 614 L822.0 622" fill="none" stroke="#000" stroke-width="1.2"/>
<path d="M1053.0 748.5 L1057.5 756.5 L1062.0 748.5" fill="none" stroke="#000" stroke-width="1.2"/>
<path d="M836.5 749 L841 757 L845.5 749" fill="none" stroke="#000" stroke-width="1.2"/>
<path d="M1037 657.5 L1045 662 L1037 666.5" fill="none" stroke="#000" stroke-width="1.2"/>
<path d="M704.9 706.5 L709.4 698.5 L713.9 706.5" fill="none" stroke="#000" stroke-width="1.2"/>
<path d="M876.7 757 V649.3 H1044" fill="none" stroke="#000" stroke-width="2.6"/>
<path d="M1037 644.8 L1045 649.3 L1037 653.8" fill="none" stroke="#000" stroke-width="2.6"/>
<circle cx="841" cy="685.3" r="3.2" fill="#000"/>
<circle cx="889.5" cy="684.5" r="3.2" fill="#000"/>
<text x="1054.8" y="656.2" font-size="13.5" fill="#000" textLength="45" lengthAdjust="spacingAndGlyphs">to MCA</text>
<g font-size="11.5" fill="#000"><text x="720.7" y="712.9" textLength="45.6" lengthAdjust="spacingAndGlyphs">src:discri</text><text x="720.7" y="724.6" textLength="78.9" lengthAdjust="spacingAndGlyphs">width=1.000[us]</text><text x="720.7" y="736.5" textLength="82.6" lengthAdjust="spacingAndGlyphs">height=0.000[us]</text></g>
<rect x="684.6" y="757" width="109.60000000000002" height="53" fill="#a6caf0" stroke="#1a1a1a" stroke-width="1.6" rx="1"/>
<rect x="816.6" y="757" width="85.60000000000002" height="53" fill="#a6caf0" stroke="#1a1a1a" stroke-width="1.6" rx="1"/>
<rect x="924.4" y="757" width="86.0" height="53" fill="#00ff00" stroke="#1a1a1a" stroke-width="1.6" rx="1"/>
<rect x="1032.6" y="757" width="86.0" height="53" fill="#a6caf0" stroke="#1a1a1a" stroke-width="1.6" rx="1"/>
<g font-size="14.5" fill="#000"><text x="708" y="788">LLD/ULD</text><text x="825" y="788">Peak Hold</text><text x="933" y="788">Trig Delay</text><text x="1041" y="778.4" textLength="42" lengthAdjust="spacingAndGlyphs">Linear</text></g>
<path d="M794.2 781 H816.6 M902.2 781 H924.4 M1010.4 781 H1032.6 M1118.6 781 H1151" fill="none" stroke="#000" stroke-width="2.6"/>
<path d="M1144 776.5 L1152 781 L1144 785.5" fill="none" stroke="#000" stroke-width="2.6"/>
</g>
<g shape-rendering="auto">
<path d="M800.5 566.5 V263 Q800.5 257.5 806 257.5 H1187.5 Q1193.5 257.5 1193.5 263 V566.5 Z" fill="#b9d1ea" stroke="#111" stroke-width="1"/>
<path d="M801 565.5 V263 Q801 258 806 258 H1187.5 Q1193.0 258 1193.0 263 V288 H801 Z" fill="url(#gSmallTitle)"/>
<path d="M801.5 564.5 V263 Q801.5 258.5 806 258.5 H1187.5" fill="none" stroke="#ffffff" stroke-width="1" opacity="0.8"/>
<path d="M1192.3 265 V565.5" stroke="#30d8f8" stroke-width="1.2"/>
<path d="M801 565.3 H1192.5" stroke="#30d8f8" stroke-width="1.2"/>
</g>
<rect x="808" y="288" width="378" height="271" fill="#ffffff"/><rect x="1193.5" y="529" width="1.5" height="11" fill="#000"/>
<rect x="810.5" y="269.5" width="14" height="12" fill="#f6f6f6" stroke="#8c8c8c" stroke-width="1"/><rect x="812.5" y="271.5" width="6" height="8" fill="url(#gIcon)"/><rect x="820.5" y="271.5" width="1" height="3" fill="#2060c0"/><rect x="818.5" y="277.5" width="3" height="2" fill="#c8c8c8"/>
<text x="918.8" y="282.8" font-size="15.5" fill="#1a1a1a" textLength="75.1" lengthAdjust="spacingAndGlyphs" shape-rendering="auto">WaveView</text>
<rect x="1084.5" y="267.5" width="30" height="17" rx="2.5" fill="url(#gBtn)" stroke="#6f7f9a" stroke-width="1" shape-rendering="auto"/><rect x="1094.5" y="277.0" width="10" height="4" rx="1.5" fill="#f2f2f2" stroke="#3c3c50" stroke-width="1" shape-rendering="auto"/>
<rect x="1119.0" y="267.5" width="30" height="17" rx="2.5" fill="url(#gBtn)" stroke="#6f7f9a" stroke-width="1" shape-rendering="auto"/><rect x="1129.0" y="272.0" width="10" height="8" rx="1.5" fill="#f2f2f2" stroke="#3c3c50" stroke-width="1" shape-rendering="auto"/><rect x="1131.5" y="274.5" width="5" height="3" fill="none" stroke="#3c3c50" stroke-width="1" shape-rendering="auto"/>
<rect x="1152.5" y="267.5" width="31" height="17" rx="2.5" fill="url(#gClose)" stroke="#6a2020" stroke-width="1" shape-rendering="auto"/><path d="M1164.6 273.7 L1171.4 278.3 M1171.4 273.7 L1164.6 278.3" stroke="#3c3c50" stroke-width="4.6" stroke-linecap="round" shape-rendering="auto"/><path d="M1164.6 273.7 L1171.4 278.3 M1171.4 273.7 L1164.6 278.3" stroke="#f4f4f4" stroke-width="2.6" stroke-linecap="round" shape-rendering="auto"/>
<g shape-rendering="crispEdges">
<path d="M856 333.5 H1138 M856 354.5 H1138 M856 375.5 H1138 M856 396.5 H1138 M856 417.5 H1138 M856 438.5 H1138 M856 459.5 H1138 M856 480.5 H1138 M856 501.5 H1138 " stroke="#c4c4c4" stroke-width="1" stroke-dasharray="3,3"/>
<path d="M884.5 312.5 V522 M912.5 312.5 V522 M941.5 312.5 V522 M969.5 312.5 V522 M997.5 312.5 V522 M1025.5 312.5 V522 M1053.5 312.5 V522 M1082.5 312.5 V522 M1110.5 312.5 V522 " stroke="#c4c4c4" stroke-width="1" stroke-dasharray="3,3"/>
<rect x="856.5" y="313.0" width="281" height="208.5" fill="none" stroke="#b0b0b0" stroke-width="1"/>
<path d="M884.5 312.5 V522 M856 522.8 H1138" stroke="#1010f0" stroke-width="1.2" stroke-dasharray="3,3"/>
<path d="M856 417.5 H1138" stroke="#8a8a8a" stroke-width="1.2"/>
<path d="M884 418.5 H888 M900 418.5 H906 M912 418.5 H920 M1025 418.5 H1030 M1041 418.5 H1046 M1059 418.5 H1064" stroke="#d0d000" stroke-width="1.5"/>
</g>
<path d="M884.6 417.4 L885 421 L886.7 430.8 L887.4 457.7 L889.5 473.9 L891.7 474.6 L895.2 454.9 L898 439.3 L900.8 422.4 L903 414.6 L905 414.6 L907.9 416.4 L910.7 417 L915 418.8 L920.6 421.7 L929 423 L934.7 424.5 L954.5 425 L964.4 425.5 L987 424 L1000 423.5 L1030 423 L1060 422.2 L1080 421.8 L1110 420.8 L1138 420.2" fill="none" stroke="#b04040" stroke-width="1.05" shape-rendering="auto"/>
<g font-size="11" fill="#000" shape-rendering="auto">
<text x="809" y="298" font-size="12">[V]</text>
<text x="833.6" y="314.3" font-size="12.5" text-anchor="end" textLength="19.3" lengthAdjust="spacingAndGlyphs">0.50</text>
<text x="833.6" y="335.2" font-size="12.5" text-anchor="end" textLength="19.3" lengthAdjust="spacingAndGlyphs">0.40</text>
<text x="833.6" y="356.2" font-size="12.5" text-anchor="end" textLength="19.3" lengthAdjust="spacingAndGlyphs">0.30</text>
<text x="833.6" y="377.2" font-size="12.5" text-anchor="end" textLength="19.3" lengthAdjust="spacingAndGlyphs">0.20</text>
<text x="833.6" y="398.1" font-size="12.5" text-anchor="end" textLength="19.3" lengthAdjust="spacingAndGlyphs">0.10</text>
<text x="833.6" y="419.1" font-size="12.5" text-anchor="end" textLength="24" lengthAdjust="spacingAndGlyphs">−0.00</text>
<text x="833.6" y="440.0" font-size="12.5" text-anchor="end" textLength="24" lengthAdjust="spacingAndGlyphs">−0.10</text>
<text x="833.6" y="460.9" font-size="12.5" text-anchor="end" textLength="24" lengthAdjust="spacingAndGlyphs">−0.20</text>
<text x="833.6" y="481.9" font-size="12.5" text-anchor="end" textLength="24" lengthAdjust="spacingAndGlyphs">−0.30</text>
<text x="833.6" y="502.9" font-size="12.5" text-anchor="end" textLength="24" lengthAdjust="spacingAndGlyphs">−0.40</text>
<text x="833.6" y="523.8" font-size="12.5" text-anchor="end" textLength="24" lengthAdjust="spacingAndGlyphs">−0.50</text>
<text x="849.5" y="534.3" font-size="11.5" textLength="13" lengthAdjust="spacingAndGlyphs">0.0</text>
<text x="877.7" y="534.3" font-size="11.5" textLength="13" lengthAdjust="spacingAndGlyphs">1.2</text>
<text x="905.9" y="534.3" font-size="11.5" textLength="13" lengthAdjust="spacingAndGlyphs">2.5</text>
<text x="934.1" y="534.3" font-size="11.5" textLength="13" lengthAdjust="spacingAndGlyphs">3.8</text>
<text x="962.3" y="534.3" font-size="11.5" textLength="13" lengthAdjust="spacingAndGlyphs">5.0</text>
<text x="990.5" y="534.3" font-size="11.5" textLength="13" lengthAdjust="spacingAndGlyphs">6.2</text>
<text x="1018.7" y="534.3" font-size="11.5" textLength="13" lengthAdjust="spacingAndGlyphs">7.5</text>
<text x="1046.9" y="534.3" font-size="11.5" textLength="13" lengthAdjust="spacingAndGlyphs">8.8</text>
<text x="1072.3" y="534.3" font-size="11.5" textLength="18.5" lengthAdjust="spacingAndGlyphs">10.0</text>
<text x="1100.5" y="534.3" font-size="11.5" textLength="18.5" lengthAdjust="spacingAndGlyphs">11.2</text>
<text x="1128.8" y="534.3" font-size="11.5" textLength="18.5" lengthAdjust="spacingAndGlyphs">12.5</text>
<text x="1146" y="548.7" font-size="12.5" textLength="19.7" lengthAdjust="spacingAndGlyphs">[us]</text>
<text x="811.5" y="552.5" font-size="12" textLength="289" lengthAdjust="spacingAndGlyphs">Sample Wave, ¥ Cosmo-Z WaveViewer (C)2015 Tokuden</text>
</g>
</svg></body></html>
